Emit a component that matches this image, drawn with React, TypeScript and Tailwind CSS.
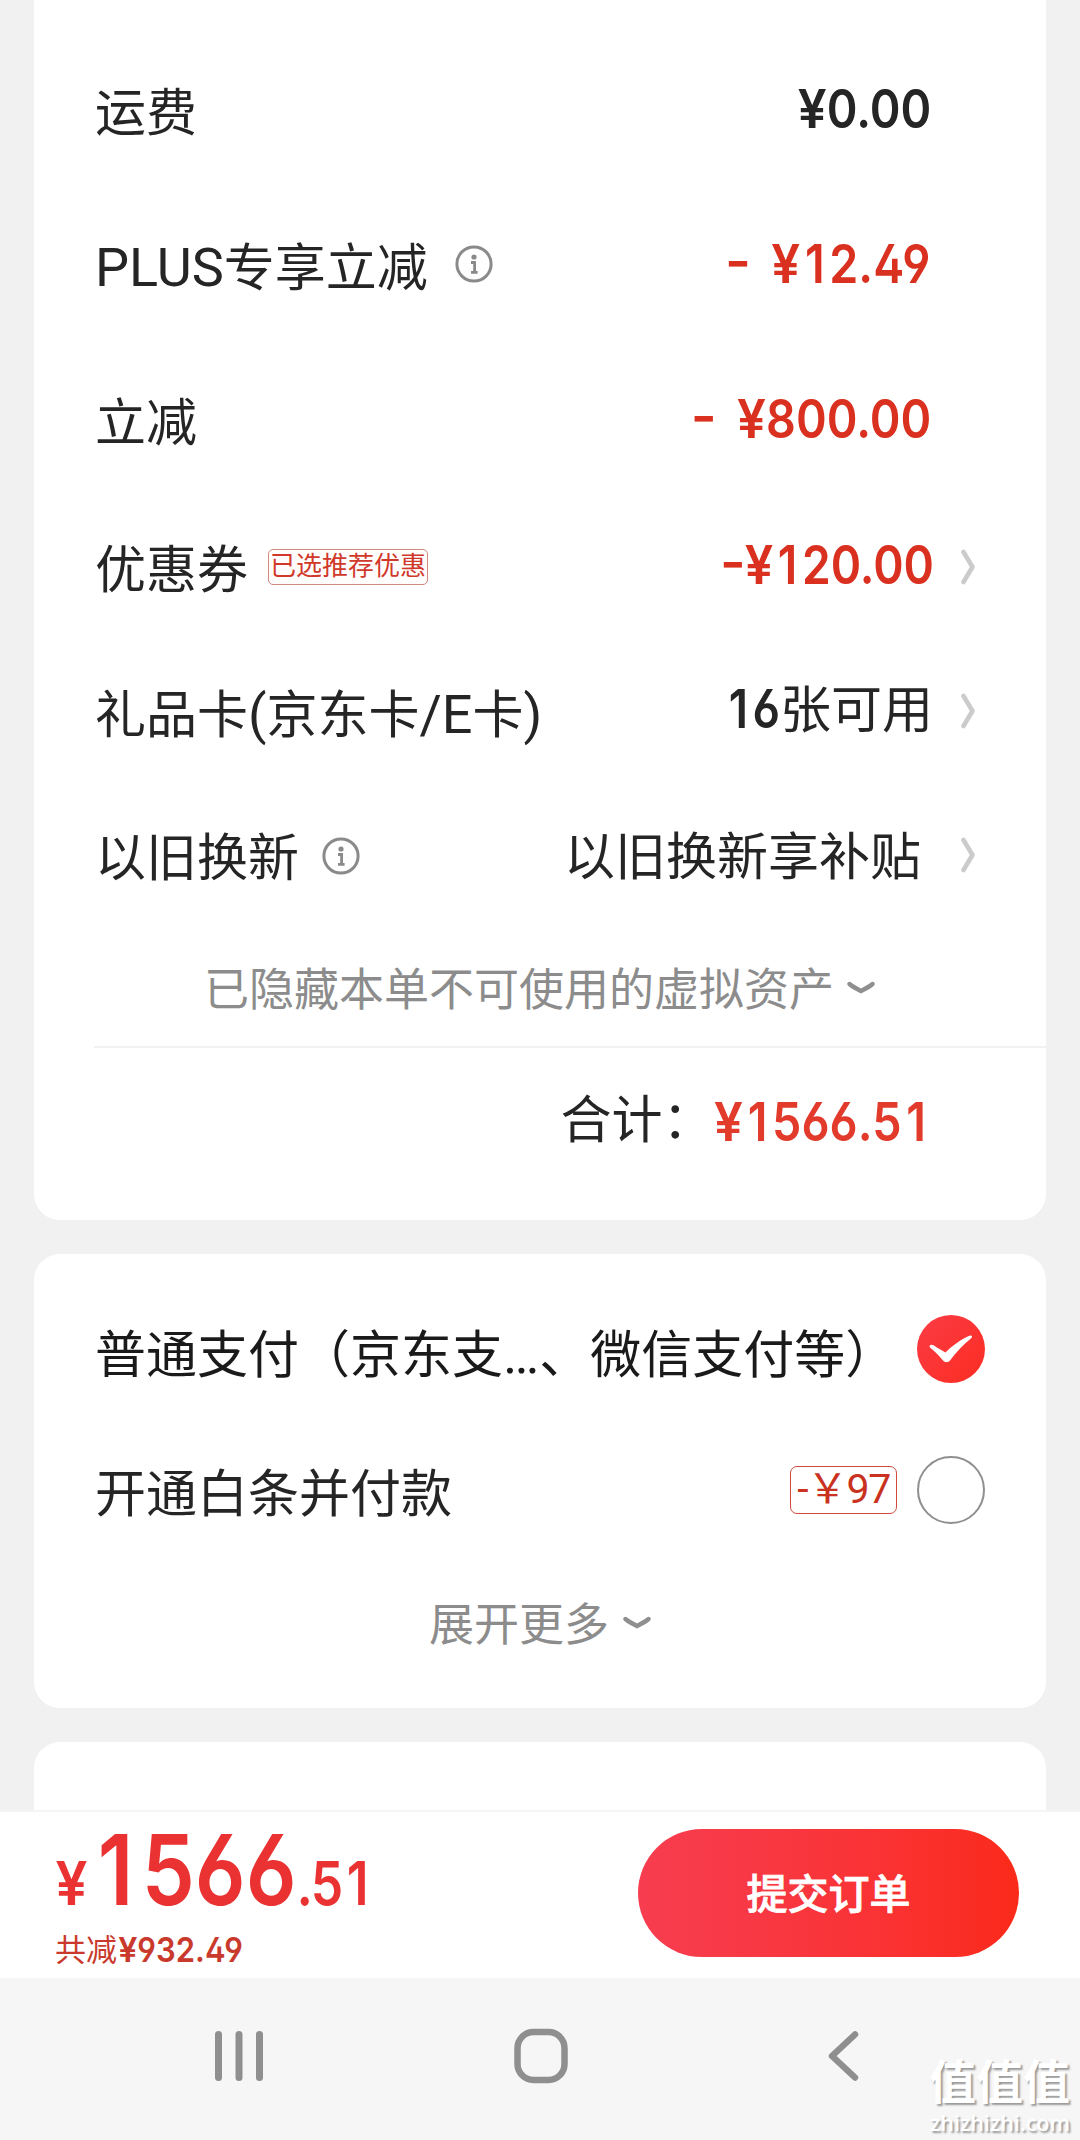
import type { ReactNode } from "react";

interface RowProps {
  label: ReactNode;
  info?: boolean;
  tag?: string;
  arrow?: boolean;
  className: string;
  children: ReactNode;
}

function InfoIcon() {
  return (
    <svg width="38" height="38" viewBox="0 0 38 38" fill="none" className="mt-[2px] shrink-0">
      <circle cx="19" cy="19" r="17.1" stroke="#8a8a8a" strokeWidth="3" />
      <circle cx="19" cy="12" r="2.6" fill="#8a8a8a" />
      <path d="M16 17.500h3.600v9.500M16 27.400h6.600" stroke="#8a8a8a" strokeWidth="2.800" />
    </svg>
  );
}

function ArrowRight() {
  return (
    <svg width="16" height="36" viewBox="0 0 16 36" fill="none" className="shrink-0">
      <path d="M3.500 3l9 15l-9 15" stroke="#cbcbcb" strokeWidth="4.600" strokeLinecap="round" strokeLinejoin="round" />
    </svg>
  );
}

function ArrowDown() {
  return (
    <svg width="28" height="14" viewBox="0 0 28 14" fill="none" className="mb-[6px] shrink-0">
      <path d="M2.500 3C6 6 10 8 14 10C18 8 22 6 25.500 3" stroke="#8f8f8f" strokeWidth="4.400" strokeLinecap="round" />
    </svg>
  );
}

// condensed figures; "1", "¥" and "-" get their own spacing
function Glyph({ char }: { char: string }) {
  if (char === "1") return <span className="mx-[0.1em]">1</span>;
  if (char === "¥") return <span className="mr-[0.03em] inline-block scale-x-[1.1]">¥</span>;
  if (char === "-") return <span className="inline-block origin-right scale-x-[1.2]">-</span>;
  return <>{char}</>;
}

function Num({ value, className = "" }: { value: string; className?: string }) {
  return (
    <span
      className={`inline-block whitespace-pre font-[Inter] font-semibold leading-none [font-feature-settings:'cv02','cv03','cv04','case'] [word-spacing:11px] ${className}`}
    >
      {value.split("").map((char, i) => (
        <Glyph key={i} char={char} />
      ))}
    </span>
  );
}

function Latin({ children }: { children: ReactNode }) {
  return <span className="text-[54px]">{children}</span>;
}

function Row({ label, info, tag, arrow, className, children }: RowProps) {
  return (
    <div className={`flex items-center justify-between pl-[61px] ${className}`}>
      <div className="flex items-center">
        <span className={arrow ? "pt-[7px]" : "pt-[11px]"}>{label}</span>
        {info && (
          <span className={arrow ? "ml-[23px]" : "ml-[27px]"}>
            <InfoIcon />
          </span>
        )}
        {tag && (
          <span className="ml-[20px] flex h-[36px] w-[160px] items-center justify-center rounded-[5px] border border-[#d08a80] bg-[#fffdfc] pb-[2px] text-[26px] text-[#d0382a]">
            {tag}
          </span>
        )}
      </div>
      <div className="flex items-center">
        {children}
        {arrow && (
          <div className="flex w-[44px] justify-end">
            <ArrowRight />
          </div>
        )}
      </div>
    </div>
  );
}

export default function App() {
  return (
    <div className="relative flex h-[2140px] w-[1080px] flex-col overflow-hidden bg-[#f1f1f1] font-[Roboto,'Noto_Sans_CJK_SC',sans-serif] text-[51px] leading-none text-[#252525]">
      <main className="flex h-[1810px] flex-col gap-[34px] overflow-hidden px-[34px]">
        <section className="h-[1220px] shrink-0 rounded-b-[26px] bg-white pt-[30px]">
          <Row label="运费" className="h-[155px] pr-[115px]">
            <Num value="¥0.00" className="origin-right scale-x-[0.88] pt-[3px] text-[53px]" />
          </Row>
          <Row label={<><Latin>PLUS</Latin>专享立减</>} info className="h-[155px] pr-[116px]">
            <Num value="- ¥12.49" className="origin-right scale-x-[0.88] pt-[3px] text-[53px] text-[#da3020]" />
          </Row>
          <Row label="立减" className="h-[155px] pr-[115px]">
            <Num value="- ¥800.00" className="origin-right scale-x-[0.88] pt-[3px] text-[53px] text-[#da3020]" />
          </Row>
          <Row label="优惠券" tag="已选推荐优惠" arrow className="h-[144px] pr-[70px]">
            <Num value="-¥120.00" className="-mr-[2px] origin-right scale-x-[0.87] pb-[4px] text-[53px] text-[#da3020]" />
          </Row>
          <Row label={<>礼品卡<Latin>(</Latin>京东卡<Latin>/E</Latin>卡<Latin>)</Latin></>} arrow className="h-[144px] pr-[70px]">
            <span className="-mr-[1px] pb-[4px]">
              <Num value="16" className="origin-right scale-x-[0.86] text-[53px]" />张可用
            </span>
          </Row>
          <Row label="以旧换新" info arrow className="h-[144px] pr-[70px]">
            <span className="pr-[11px] pt-[4px]">以旧换新享补贴</span>
          </Row>
          <div className="flex h-[119px] items-center gap-[13px] pl-[170px] pt-[8px] text-[45px] text-[#8c8c8c]">
            已隐藏本单不可使用的虚拟资产
            <ArrowDown />
          </div>
          <div className="ml-[60px] h-[2px] bg-[#f1f1f1]" />
          <div className="flex h-[144px] items-center justify-end pr-[115px]">
            <span>合计：</span>
            <Num value="¥1566.51" className="-ml-[27px] origin-right scale-x-[0.88] pt-[4px] text-[53px] text-[#e23a2b]" />
          </div>
        </section>

        <section className="h-[454px] shrink-0 rounded-[26px] bg-white pl-[61px] pr-[61px] pt-[24px]">
          <div className="flex h-[141px] items-center justify-between text-[#1a1a1a]">
            <span className="pt-[12px]">普通支付（京东支<Latin>…</Latin>、微信支付等）</span>
            <svg width="68" height="68" viewBox="0 0 68 68" className="shrink-0">
              <defs>
                <linearGradient id="check" x1="0" y1="0" x2="1" y2="1">
                  <stop offset="0" stopColor="#fb3c45" />
                  <stop offset="1" stopColor="#fc2c22" />
                </linearGradient>
              </defs>
              <circle cx="34" cy="34" r="34" fill="url(#check)" />
              <path
                d="M13.500 30C15 29.500 17 30.500 19 32L28.500 37.500C35 31 44 24 53 20.500C55 20 55.500 21.500 54.500 23C46 30 39 37 33 45.500C31 47.800 28 47.800 26 45.500C22 40.500 18 36.500 13.500 33C12.300 32 12.300 30.500 13.500 30Z"
                fill="#fff"
              />
            </svg>
          </div>
          <div className="flex h-[141px] items-center">
            <span className="pt-[9px]">开通白条并付款</span>
            <span className="ml-auto mr-[20px] flex h-[48px] w-[107px] items-center justify-center rounded-[7px] border-[1.5px] border-[#cf4a3c] text-[41px] tracking-[-1.5px] text-[#c93220]">
              -￥97
            </span>
            <span className="h-[68px] w-[68px] rounded-full border-2 border-[#8f8f8f]" />
          </div>
          <div className="flex h-[124px] items-center justify-center gap-[14px] pt-[7px] text-[45px] text-[#8c8c8c]">
            展开更多
            <ArrowDown />
          </div>
        </section>

        <section className="h-[120px] shrink-0 rounded-t-[26px] bg-white" />
      </main>

      <footer className="flex h-[168px] shrink-0 justify-between border-t-2 border-[#f4f4f4] bg-white pl-[57px] pr-[61px] pt-[17px]">
        <div className="-mt-[8px]">
          <div className="flex h-[112px] w-[375px] origin-left scale-x-[0.86] items-baseline text-[#ea3232]">
            <Num value="¥" className="mr-[2px] text-[60px]" />
            <Num value="1566" className="text-[98px]" />
            <Num value=".51" className="text-[60px] tracking-[-2px]" />
          </div>
          <div className="-ml-[2px] flex items-center text-[31px] text-[#c93a2c]">
            共减
            <Num value="¥932.49" className="ml-[2px] origin-left scale-x-[0.91] text-[34px]" />
          </div>
        </div>
        <button className="h-[128px] w-[381px] rounded-full bg-linear-to-r from-[#f73d50] to-[#fb2a19] pt-[4px] text-[41px] font-medium text-white [-webkit-text-stroke:0.8px_white]">
          提交订单
        </button>
      </footer>

      <nav className="flex h-[162px] items-start bg-[#f6f6f6] pt-[50px]">
        <svg width="1080" height="58" viewBox="0 0 1080 58" fill="none" stroke="#8f8f8f" strokeLinecap="round" strokeLinejoin="round">
          <path d="M218.500 6.500v43M239 6.500v43M259.500 6.500v43" strokeWidth="7" />
          <rect x="517.500" y="4" width="47" height="48" rx="16" strokeWidth="6.500" />
          <path d="M855 6.500L832 28L855 49.500" strokeWidth="6.500" />
        </svg>
      </nav>

      {/* site watermark */}
      <div className="absolute bottom-[7px] right-[10px] flex flex-col items-end gap-[6px] text-white [text-shadow:2px_2px_2px_#999]">
        <span className="text-[47px] font-bold">值值值</span>
        <span className="font-['Open_Sans'] text-[21.500px] font-semibold">zhizhizhi.com</span>
      </div>
    </div>
  );
}
